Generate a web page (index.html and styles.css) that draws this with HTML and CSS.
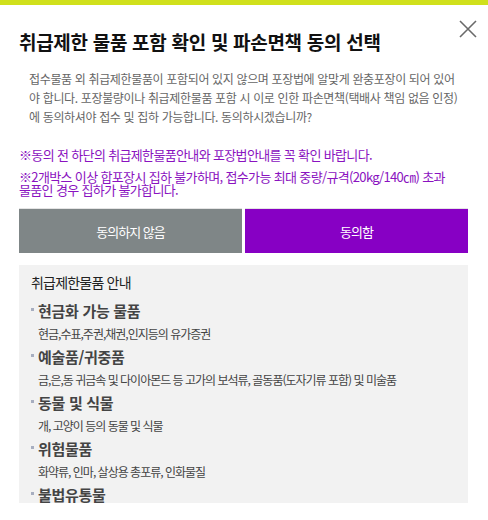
FILE: index.html
```html
<!DOCTYPE html>
<html lang="ko">
<head>
<meta charset="utf-8">
<link rel="stylesheet" href="styles.css">
</head>
<body>
<div class="topbar"></div>
<div class="modal">
  <button class="close" aria-label="닫기">
    <svg width="18" height="18" viewBox="0 0 18 18"><path d="M1 1 L17 17 M17 1 L1 17" stroke="#6a6a6a" stroke-width="1.6" fill="none"/></svg>
  </button>
  <h1 class="title">취급제한 물품 포함 확인 및 파손면책 동의 선택</h1>
  <p class="desc">접수물품 외 취급제한물품이 포함되어 있지 않으며 포장법에 알맞게 완충포장이 되어 있어야 합니다. 포장불량이나 취급제한물품 포함 시 이로 인한 파손면책(택배사 책임 없음 인정)에 동의하셔야 접수 및 집하 가능합니다. 동의하시겠습니까?</p>
  <p class="notice">※동의 전 하단의 취급제한물품안내와 포장법안내를 꼭 확인 바랍니다.</p>
  <p class="notice second">※2개박스 이상 합포장시 집하 불가하며, 접수가능 최대 중량/규격(20kg/140㎝) 초과 물품인 경우 집하가 불가합니다.</p>
  <div class="buttons">
    <button class="btn btn-no">동의하지 않음</button>
    <button class="btn btn-yes">동의함</button>
  </div>
  <div class="guide">
    <div class="guide-title">취급제한물품 안내</div>
    <ul class="items">
      <li><div class="item-head">현금화 가능 물품</div><div class="item-desc">현금,수표,주권,채권,인지등의 유가증권</div></li>
      <li><div class="item-head">예술품/귀중품</div><div class="item-desc">금,은,동 귀금속 및 다이아몬드 등 고가의 보석류, 골동품(도자기류 포함) 및 미술품</div></li>
      <li><div class="item-head">동물 및 식물</div><div class="item-desc">개, 고양이 등의 동물 및 식물</div></li>
      <li><div class="item-head">위험물품</div><div class="item-desc">화약류, 인마, 살상용 총포류, 인화물질</div></li>
      <li><div class="item-head">불법유통물</div></li>
    </ul>
  </div>
</div>
</body>
</html>
```

FILE: styles.css
```css
* { box-sizing: border-box; }
html, body { margin: 0; padding: 0; background: #fff; }
body {
  font-family: "Noto Sans CJK KR", "Noto Sans", sans-serif;
  width: 488px;
  height: 520px;
  overflow: hidden;
}
.topbar { height: 5px; background: #d0e01c; }
.modal { position: relative; padding: 22px 20px 0 19px; }
.close {
  position: absolute;
  top: 15px;
  right: 11px;
  width: 18px;
  height: 18px;
  padding: 0;
  border: 0;
  background: none;
  display: flex;
}
.title {
  margin: 0;
  font-size: 19px;
  line-height: 30px;
  font-weight: 700;
  letter-spacing: -0.3px;
  color: #111;
}
.desc {
  margin: 12px 0 0;
  padding: 0 10px;
  font-size: 12px;
  line-height: 19px;
  letter-spacing: -0.35px;
  color: #666;
  word-break: break-all;
}
.notice {
  margin: 22px 0 0;
  font-size: 13px;
  line-height: 13px;
  letter-spacing: -0.65px;
  color: #8a12c0;
  word-break: keep-all;
}
.notice.second { margin-top: 9px; }
.buttons {
  margin-top: 12px;
  display: grid;
  grid-template-columns: 1fr 1fr;
  gap: 3px;
}
.btn {
  height: 45px;
  border: 0;
  border-top: 1px solid #e4e4e4;
  font-family: inherit;
  font-size: 13px;
  letter-spacing: -1px;
  color: #fff;
}
.btn-no { background: #7f8687; }
.btn-yes { background: #8700c4; }
.guide {
  margin-top: 12px;
  height: 238px;
  overflow: hidden;
  background: #f2f2f2;
  padding: 6px 12px 0;
}
.guide-title {
  font-size: 14px;
  line-height: 23px;
  letter-spacing: -0.8px;
  color: #222;
  margin-bottom: 5px;
}
.items { list-style: none; margin: 0; padding: 0; }
.item-head {
  position: relative;
  padding-left: 7px;
  font-size: 15px;
  line-height: 23px;
  font-weight: 700;
  letter-spacing: -0.3px;
  color: #444;
}
.item-head::before {
  content: "";
  position: absolute;
  left: 0;
  top: 9px;
  width: 3px;
  height: 3px;
  background: #a7aec0;
}
.item-desc {
  padding-left: 7px;
  font-size: 12px;
  line-height: 23px;
  letter-spacing: -1px;
  color: #444;
}
```
